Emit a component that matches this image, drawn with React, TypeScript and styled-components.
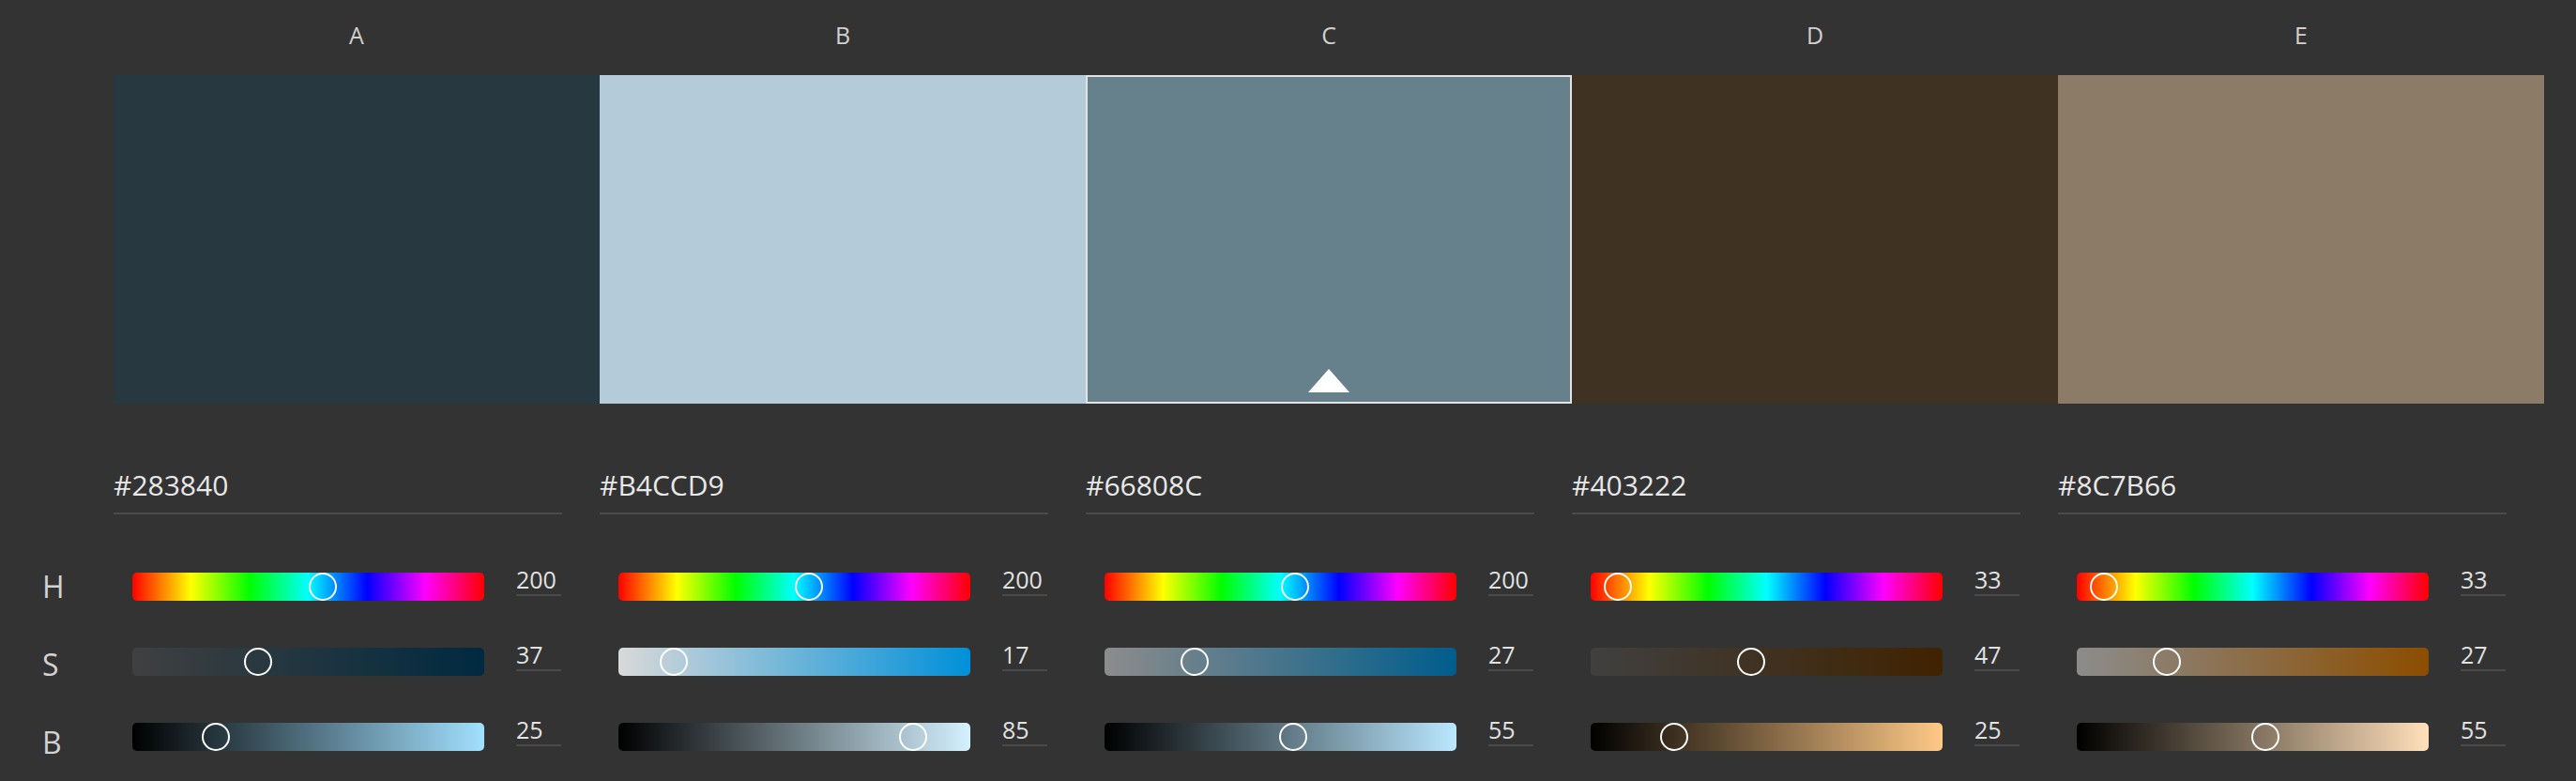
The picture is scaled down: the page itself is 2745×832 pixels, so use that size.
import React from 'react';
import styled, { createGlobalStyle } from 'styled-components';

const Global = createGlobalStyle`
  html, body {
    margin: 0;
    padding: 0;
    background: #333333;
  }
  body {
    font-family: "Open Sans", "Noto Sans", sans-serif;
    width: 2745px;
    height: 832px;
    overflow: hidden;
  }
`;

const Page = styled.div`
  display: flex;
  width: 2745px;
  height: 832px;
  background: #333333;
`;

const LabelColumn = styled.div`
  width: 121px;
  box-sizing: border-box;
  padding-top: 583px;
  padding-left: 45px;
  display: flex;
  flex-direction: column;
`;

const ChannelLabel = styled.div`
  height: 83px;
  display: flex;
  align-items: center;
  font-size: 32px;
  color: #d2d2d2;
`;

const ColorColumn = styled.div`
  width: 518px;
  display: flex;
  flex-direction: column;
`;

const Letter = styled.div`
  height: 80px;
  line-height: 74px;
  text-align: center;
  font-size: 25px;
  color: #d0d0d0;
`;

const Swatch = styled.div<{ $color: string; $selected?: boolean }>`
  position: relative;
  height: 350px;
  background: ${(p) => p.$color};
  box-shadow: ${(p) => (p.$selected ? 'inset 0 0 0 2px #e2e2e2' : 'none')};
`;

const Marker = styled.div`
  position: absolute;
  bottom: 12px;
  left: 50%;
  transform: translateX(-50%);
  width: 0;
  height: 0;
  border-left: 22px solid transparent;
  border-right: 22px solid transparent;
  border-bottom: 25px solid #ffffff;
`;

const HexField = styled.div`
  margin-top: 67px;
  width: 478px;
  height: 40px;
  line-height: 40px;
  padding-bottom: 9px;
  border-bottom: 2px solid #4a4a4a;
  font-size: 30px;
  color: #e8e8e8;
`;

const SliderList = styled.div`
  padding-top: 37px;
  display: flex;
  flex-direction: column;
`;

const SliderRow = styled.div`
  height: 80px;
  display: flex;
  align-items: center;
`;

const Track = styled.div<{ $bg: string }>`
  position: relative;
  margin-left: 20px;
  width: 375px;
  height: 30px;
  border-radius: 5px;
  background: ${(p) => p.$bg};
`;

const Knob = styled.div`
  position: absolute;
  top: 0;
  width: 30px;
  height: 30px;
  box-sizing: border-box;
  border: 2.5px solid #ffffff;
  border-radius: 50%;
  transform: translateX(-50%);
`;

const ValueField = styled.div`
  align-self: flex-start;
  margin-top: 17px;
  margin-left: 34px;
  width: 48px;
  height: 30px;
  line-height: 30px;
  padding-bottom: 1px;
  border-bottom: 2px solid #4a4a4a;
  font-size: 25px;
  color: #e2e2e2;
`;

function hsv(h: number, s: number, v: number): string {
  const ss = s / 100;
  const vv = v / 100;
  const f = (n: number) => {
    const k = (n + h / 60) % 6;
    return vv - vv * ss * Math.max(0, Math.min(k, 4 - k, 1));
  };
  return `rgb(${Math.round(f(5) * 255)}, ${Math.round(f(3) * 255)}, ${Math.round(f(1) * 255)})`;
}

const HUE =
  'linear-gradient(to right, #ff0000 0%, #ffff00 16.67%, #00ff00 33.33%, #00ffff 50%, #0000ff 66.67%, #ff00ff 83.33%, #ff0000 100%)';

type Entry = { letter: string; hex: string; h: number; s: number; b: number; selected?: boolean };

const entries: Entry[] = [
  { letter: 'A', hex: '#283840', h: 200, s: 37, b: 25 },
  { letter: 'B', hex: '#B4CCD9', h: 200, s: 17, b: 85 },
  { letter: 'C', hex: '#66808C', h: 200, s: 27, b: 55, selected: true },
  { letter: 'D', hex: '#403222', h: 33, s: 47, b: 25 },
  { letter: 'E', hex: '#8C7B66', h: 33, s: 27, b: 55 },
];

function Slider({ bg, pct, value }: { bg: string; pct: number; value: number }) {
  return (
    <SliderRow>
      <Track $bg={bg}>
        <Knob style={{ left: `calc(${pct}% - 5px)` }} />
      </Track>
      <ValueField>{value}</ValueField>
    </SliderRow>
  );
}

export default function App() {
  return (
    <>
      <Global />
      <Page>
        <LabelColumn>
          <ChannelLabel>H</ChannelLabel>
          <ChannelLabel>S</ChannelLabel>
          <ChannelLabel>B</ChannelLabel>
        </LabelColumn>
        {entries.map((e) => {
          const satBg = `linear-gradient(to right, ${hsv(e.h, 0, e.b)}, ${hsv(e.h, 100, e.b)})`;
          const briBg = `linear-gradient(to right, #000000, ${hsv(e.h, e.s, 100)})`;
          return (
            <ColorColumn key={e.letter}>
              <Letter>{e.letter}</Letter>
              <Swatch $color={e.hex} $selected={e.selected}>
                {e.selected && <Marker />}
              </Swatch>
              <HexField>{e.hex}</HexField>
              <SliderList>
                <Slider bg={HUE} pct={(e.h / 360) * 100} value={e.h} />
                <Slider bg={satBg} pct={e.s} value={e.s} />
                <Slider bg={briBg} pct={e.b} value={e.b} />
              </SliderList>
            </ColorColumn>
          );
        })}
      </Page>
    </>
  );
}
